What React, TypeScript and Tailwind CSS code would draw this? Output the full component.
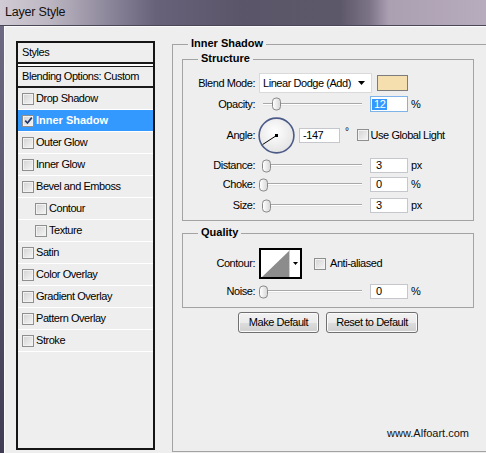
import React from 'react';

type StyleItem = { label: string; indent?: boolean; checked?: boolean; selected?: boolean };

const styleItems: StyleItem[] = [
  { label: 'Drop Shadow' },
  { label: 'Inner Shadow', checked: true, selected: true },
  { label: 'Outer Glow' },
  { label: 'Inner Glow' },
  { label: 'Bevel and Emboss' },
  { label: 'Contour', indent: true },
  { label: 'Texture', indent: true },
  { label: 'Satin' },
  { label: 'Color Overlay' },
  { label: 'Gradient Overlay' },
  { label: 'Pattern Overlay' },
  { label: 'Stroke' },
];

function CheckBox({ checked }: { checked?: boolean }) {
  return (
    <span className="w-[12px] h-[12px] shrink-0 border border-[#8e8f8f] bg-[linear-gradient(135deg,#d2d2d2,#f6f6f6)] shadow-[inset_0_0_0_1px_#f2f2f2] flex items-center justify-center">
      {checked && (
        <svg width="9" height="9" viewBox="0 0 9 9">
          <path d="M1.2 4.6 L3.5 7 L7.8 1.6" fill="none" stroke="#24386a" strokeWidth="1.7" />
        </svg>
      )}
    </span>
  );
}

function Slider({ thumb }: { thumb: number }) {
  return (
    <div className="relative w-[111px] h-full flex items-center">
      <div className="ml-[4px] w-[99px] h-[3px] border-t border-[#a8a8a8] border-b border-b-[#e6e6e6] bg-white" />
      <span
        className="absolute top-1/2 -translate-y-1/2 w-[9px] h-[13px] rounded-[4px] border border-[#8a8a8a] bg-[linear-gradient(90deg,#ffffff,#d9d9d9)]"
        style={{ left: thumb }}
      />
    </div>
  );
}

function NumBox({ value, unit, focused }: { value: string; unit: string; focused?: boolean }) {
  return (
    <>
      <div
        className={
          focused
            ? 'w-[38px] h-[16px] bg-white border border-[#7eb4ea] flex items-center pl-[1px]'
            : 'w-[38px] h-[15px] bg-white border border-[#c5c7cc] flex items-center pl-[5px]'
        }
      >
        {focused ? <span className="bg-[#3399ff] text-white px-[2px] leading-[11px]">{value}</span> : value}
      </div>
      <span className="ml-[3px]">{unit}</span>
    </>
  );
}

function Label({ text }: { text: string }) {
  return <span className="w-[72px] text-right shrink-0">{text}</span>;
}

function Group({ title, className, children }: { title: string; className: string; children: React.ReactNode }) {
  return (
    <div className={`relative border border-[#a3a3a3] ${className}`}>
      <span className="absolute -top-[8px] left-[15px] px-[3px] bg-[#eeeeee] font-bold tracking-normal leading-[13px]">
        {title}
      </span>
      {children}
    </div>
  );
}

function AngleDial({ angle }: { angle: number }) {
  const r = 16.5;
  const rad = (angle * Math.PI) / 180;
  const x2 = 18.5 + r * Math.cos(rad);
  const y2 = 18.5 - r * Math.sin(rad);
  return (
    <svg width="37" height="37" viewBox="0 0 37 37" className="ml-[3px] shrink-0">
      <defs>
        <radialGradient id="dialFill" cx="45%" cy="40%" r="65%">
          <stop offset="0" stopColor="#ffffff" />
          <stop offset="1" stopColor="#e2e2e2" />
        </radialGradient>
      </defs>
      <circle cx="18.5" cy="18.5" r="17.4" fill="url(#dialFill)" stroke="#4b5a89" strokeWidth="1.6" />
      <line x1="18.5" y1="18.5" x2={x2} y2={y2} stroke="#000" strokeWidth="1" />
      <rect x="17" y="17" width="3" height="3" fill="#000" />
    </svg>
  );
}

export default function App() {
  return (
    <div className="w-[486px] h-[453px] overflow-hidden bg-[#eeeeee] text-[11px] text-black tracking-[-0.45px] font-['Liberation_Sans',Arial,sans-serif]">
      {/* title bar */}
      <div className="h-[26px] border-b border-[#4a4756] bg-[linear-gradient(90deg,#d0cbd4_0%,#bdb7c3_10%,#8e889c_22%,#67627a_32%,#5a5568_50%,#5d5869_70%,#7c7387_76%,#ab9fb2_80%,#b7acbd_100%)] flex items-center pl-[5px]">
        <span className="text-[12.5px] tracking-[-0.2px] text-[#111]">Layer Style</span>
      </div>

      <div className="flex h-[427px]">
        <div className="w-[4px] shrink-0 bg-[linear-gradient(#6e6982,#403c54)]" />
        <div className="flex-1 flex items-start border-l border-t border-[#fbfbfb] pl-[11px] pt-[14px] overflow-hidden">
          {/* styles list */}
          <div className="w-[139px] h-[409px] shrink-0 border-2 border-[#151515] flex flex-col">
            <div className="h-[19px] flex items-center pl-[4px]">Styles</div>
            <div className="h-[5px] border-t-2 border-b border-[#1a1a1a] bg-white" />
            <div className="h-[21px] flex items-center pl-[4px] border-b-2 border-[#1a1a1a]">Blending Options: Custom</div>
            {styleItems.map((item) => (
              <div
                key={item.label}
                className={`h-[22px] flex items-center border-b border-white ${item.indent ? 'pl-[17px]' : 'pl-[4px]'} ${
                  item.selected ? 'bg-[#3399ff] text-white font-bold tracking-normal' : ''
                }`}
              >
                <CheckBox checked={item.checked} />
                <span className="ml-[2px]">{item.label}</span>
              </div>
            ))}
          </div>

          {/* settings */}
          <Group title="Inner Shadow" className="ml-[17px] mt-[3px] w-[340px] h-[408px] shrink-0">
            <div className="ml-[9px] mt-[14px] w-[292px] flex flex-col">
              <Group title="Structure" className="w-[292px] pt-[13px] pb-[7px]">
                <div className="h-[20px] flex items-center">
                  <Label text="Blend Mode:" />
                  <div className="ml-[4px] w-[113px] h-[20px] bg-white border border-[#dadada] flex items-center justify-between pl-[3px] pr-[6px]">
                    <span>Linear Dodge (Add)</span>
                    <svg width="7" height="4" viewBox="0 0 7 4">
                      <path d="M0 0H7L3.5 4Z" fill="#000" />
                    </svg>
                  </div>
                  <span className="ml-[5px] w-[31px] h-[16px] border border-[#7c7c7c] bg-[#f5dfae]" />
                </div>
                <div className="mt-[3px] h-[16px] flex items-center">
                  <Label text="Opacity:" />
                  <div className="ml-[4px] h-full">
                    <Slider thumb={13} />
                  </div>
                  <NumBox value="12" unit="%" focused />
                </div>
                <div className="mt-[5px] h-[36px] flex items-center">
                  <Label text="Angle:" />
                  <AngleDial angle={-147} />
                  <div className="ml-[4px] w-[41px] h-[15px] bg-white border border-[#c5c7cc] flex items-center pl-[3px]">-147</div>
                  <span className="ml-[5px] self-start mt-[10px] text-[10px] leading-[10px]">°</span>
                  <span className="ml-[8px]">
                    <CheckBox />
                  </span>
                  <span className="ml-[2px]">Use Global Light</span>
                </div>
                <div className="mt-[5px] h-[15px] flex items-center">
                  <Label text="Distance:" />
                  <div className="ml-[4px] h-full">
                    <Slider thumb={3} />
                  </div>
                  <NumBox value="3" unit="px" />
                </div>
                <div className="mt-[4px] h-[15px] flex items-center">
                  <Label text="Choke:" />
                  <div className="ml-[4px] h-full">
                    <Slider thumb={0} />
                  </div>
                  <NumBox value="0" unit="%" />
                </div>
                <div className="mt-[6px] h-[15px] flex items-center">
                  <Label text="Size:" />
                  <div className="ml-[4px] h-full">
                    <Slider thumb={3} />
                  </div>
                  <NumBox value="3" unit="px" />
                </div>
              </Group>

              <Group title="Quality" className="mt-[12px] w-[292px] pt-[14px] pb-[8px]">
                <div className="h-[31px] flex items-center">
                  <Label text="Contour:" />
                  <div className="ml-[4px] w-[43px] h-[31px] border-2 border-black bg-white flex">
                    <svg width="28" height="27" viewBox="0 0 28 27" className="shrink-0">
                      <path d="M1 27 L28 1 L28 27 Z" fill="#8c8c8c" />
                    </svg>
                    <div className="flex-1 border-l border-[#cfcfcf] flex items-center justify-center">
                      <svg width="5" height="3" viewBox="0 0 5 3">
                        <path d="M0 0H5L2.5 3Z" fill="#000" />
                      </svg>
                    </div>
                  </div>
                  <span className="ml-[12px]">
                    <CheckBox />
                  </span>
                  <span className="ml-[4px]">Anti-aliased</span>
                </div>
                <div className="mt-[5px] h-[15px] flex items-center">
                  <Label text="Noise:" />
                  <div className="ml-[4px] h-full">
                    <Slider thumb={0} />
                  </div>
                  <NumBox value="0" unit="%" />
                </div>
              </Group>

              <div className="mt-[4px] flex justify-center gap-[7px]">
                <button className="w-[81px] h-[21px] rounded-[3px] border border-[#707070] bg-[linear-gradient(#f2f2f2_0%,#ebebeb_50%,#dddddd_51%,#cfcfcf_100%)] shadow-[inset_0_0_0_1px_#fbfbfb]">
                  Make Default
                </button>
                <button className="w-[92px] h-[21px] rounded-[3px] border border-[#707070] bg-[linear-gradient(#f2f2f2_0%,#ebebeb_50%,#dddddd_51%,#cfcfcf_100%)] shadow-[inset_0_0_0_1px_#fbfbfb]">
                  Reset to Default
                </button>
              </div>

              <div className="mt-[94px] pr-[5px] text-right leading-[13px] tracking-normal text-[#111]">www.Alfoart.com</div>
            </div>
          </Group>
        </div>
      </div>
    </div>
  );
}
